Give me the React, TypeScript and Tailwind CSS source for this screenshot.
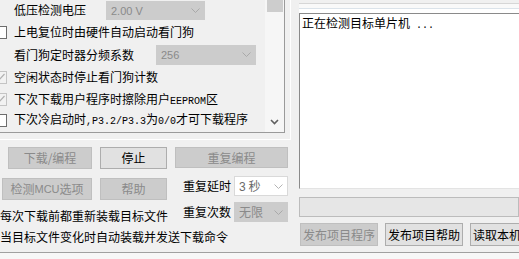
import type { ReactNode } from 'react'

const mono = "font-['Liberation_Mono',monospace] text-[10px]"

const Chevron = ({ color = '#a6a6a6' }: { color?: string }) => (
  <svg width="9" height="5" viewBox="0 0 9 5" className="shrink-0">
    <polyline points="0.5,0.5 4.5,4.5 8.5,0.5" fill="none" stroke={color} strokeWidth="1" />
  </svg>
)

const Btn = ({ label, disabled, className }: { label: ReactNode; disabled?: boolean; className: string }) => (
  <div
    className={
      'flex items-center justify-center shrink-0 border whitespace-nowrap text-[12px] leading-none ' +
      (disabled ? 'bg-[#cccccc] border-[#bfbfbf] text-[#8a8a8a] ' : 'bg-[#e1e1e1] border-[#adadad] text-black ') +
      className
    }
  >
    {label}
  </div>
)

const Select = ({ value, disabled, className }: { value: ReactNode; disabled?: boolean; className: string }) => (
  <div
    className={
      'flex items-center justify-between shrink-0 border pl-[4px] pr-[4px] ' +
      (disabled ? 'bg-[#cccccc] border-[#cccccc] text-[#8a8a8a] ' : 'bg-white border-[#d9d9d9] text-[#6a6a6a] ') +
      className
    }
  >
    <span className="leading-none whitespace-nowrap">{value}</span>
    <Chevron color={disabled ? '#a9a9a9' : '#b4b4b4'} />
  </div>
)

const Check = ({ checked }: { checked?: boolean }) =>
  checked ? (
    <div className="w-[13px] h-[13px] ml-[-6px] shrink-0 border border-[#c4c4c4] bg-[#f2f2f2] flex items-center justify-center">
      <svg width="11" height="11" viewBox="0 0 11 11">
        <polyline points="1.5,5.5 4,8 9.5,2" fill="none" stroke="#b0b0b0" strokeWidth="1.2" />
      </svg>
    </div>
  ) : (
    <div className="w-[13px] h-[13px] ml-[-6px] shrink-0 border border-[#6d6d6d] bg-white" />
  )

const CheckRow = ({ checked, h, children }: { checked?: boolean; h: string; children: ReactNode }) => (
  <div className={'flex items-center whitespace-nowrap ' + h}>
    <Check checked={checked} />
    <span className="ml-[7px] leading-none">{children}</span>
  </div>
)

const App = () => {
  return (
    <div className="w-[519px] h-[259px] overflow-hidden bg-[#f7f7f7] text-[12px] text-black font-['Noto_Sans_CJK_SC',sans-serif]">
      <div className="h-[253px] flex bg-[#f0f0f0] border-b border-[#a0a0a0]">
        {/* left side */}
        <div className="w-[291px] shrink-0 flex flex-col">
          <div className="h-[140px] border-r border-b border-white">
            <div className="w-[285px] h-[133px] border-r border-b border-[#9a9a9a] flex">
              <div className="flex-1 flex flex-col overflow-hidden">
                <div className="h-[20px] flex items-center whitespace-nowrap">
                  <span className="pl-[14px] w-[106px] leading-none">低压检测电压</span>
                  <Select disabled value={<span className="font-['Liberation_Sans',sans-serif] text-[11px]">2.00 V</span>} className="w-[99px] h-[19px]" />
                </div>
                <CheckRow h="h-[24px]">上电复位时由硬件自动启动看门狗</CheckRow>
                <div className="h-[21px] flex items-center whitespace-nowrap">
                  <span className="pl-[14px] w-[156px] leading-none">看门狗定时器分频系数</span>
                  <Select disabled value={<span className="font-['Liberation_Sans',sans-serif] text-[11px]">256</span>} className="w-[100px] h-[20px]" />
                </div>
                <CheckRow checked h="h-[24px]">空闲状态时停止看门狗计数</CheckRow>
                <CheckRow checked h="h-[21px]">
                  下次下载用户程序时擦除用户<span className={mono}>EEPROM</span>区
                </CheckRow>
                <CheckRow h="h-[20px]">
                  下次冷启动时<span className={mono}>,P3.2/P3.3</span>为<span className={mono}>0/0</span>才可下载程序
                </CheckRow>
              </div>
              <div className="w-[19px] shrink-0 bg-[#f6f6f6] flex flex-col items-center justify-between pb-[7px]">
                <div className="w-[16px] h-[12px] bg-[#cdcdcd]" />
                <svg width="9" height="6" viewBox="0 0 9 6">
                  <polyline points="1,1 4.5,4.5 8,1" fill="none" stroke="#606060" strokeWidth="1.6" />
                </svg>
              </div>
            </div>
          </div>

          <div className="flex pt-[7px]">
            <div className="w-[167px] shrink-0 flex flex-col">
              <div className="flex">
                <Btn disabled label="下载/编程" className="ml-[8px] w-[84px] h-[22px]" />
                <Btn label="停止" className="ml-[8px] w-[67px] h-[22px]" />
              </div>
              <div className="flex mt-[9px]">
                <Btn disabled label={<>检测<span className="font-['Liberation_Sans',sans-serif] text-[11px]">MCU</span>选项</>} className="ml-[2px] w-[90px] h-[22px]" />
                <Btn disabled label="帮助" className="ml-[8px] w-[67px] h-[22px]" />
              </div>
              <div className="mt-[8px] leading-[16px] whitespace-nowrap">每次下载前都重新装载目标文件</div>
              <div className="mt-[5px] leading-[16px] whitespace-nowrap">当目标文件变化时自动装载并发送下载命令</div>
            </div>
            <div className="ml-[8px] w-[113px] shrink-0 flex flex-col">
              <Btn disabled label="重复编程" className="w-full h-[21px]" />
              <div className="mt-[8px] h-[20px] flex items-center">
                <span className="ml-[8px] w-[48px] leading-none whitespace-nowrap">重复延时</span>
                <Select value={<><span className="font-['Liberation_Sans',sans-serif]">3</span> 秒</>} className="ml-[3px] w-[54px] h-[20px]" />
              </div>
              <div className="mt-[6px] h-[20px] flex items-center">
                <span className="ml-[8px] w-[48px] leading-none whitespace-nowrap">重复次数</span>
                <Select disabled value="无限" className="ml-[3px] w-[54px] h-[20px]" />
              </div>
            </div>
          </div>
        </div>

        {/* right side */}
        <div className="flex-1 min-w-0 overflow-hidden pl-[8px] flex flex-col">
          <div className="mt-[3px] h-[5px] border-t border-[#d6d6d6] bg-[#f9f9f9]" />
          <div className="h-[5px] border-t border-[#dbe3ea] bg-white" />
          <div className="h-[176px] border-t border-l border-b border-[#8a8a8a] border-b-[#e3e3e3] bg-white pl-[2px] pt-[1px]">
            <div className="leading-[16px] whitespace-nowrap">
              正在检测目标单片机<span className={mono}> ...</span>
            </div>
          </div>
          <div className="mt-[8px] h-[20px] border border-[#bcbcbc] bg-[#e6e6e6]" />
          <div className="mt-[6px] flex">
            <Btn disabled label="发布项目程序" className="ml-[1px] w-[78px] h-[23px]" />
            <Btn label="发布项目帮助" className="ml-[7px] w-[78px] h-[23px]" />
            <Btn label="读取本机硬件号" className="ml-[7px] w-[90px] h-[23px]" />
          </div>
        </div>
      </div>
    </div>
  )
}

export default App
